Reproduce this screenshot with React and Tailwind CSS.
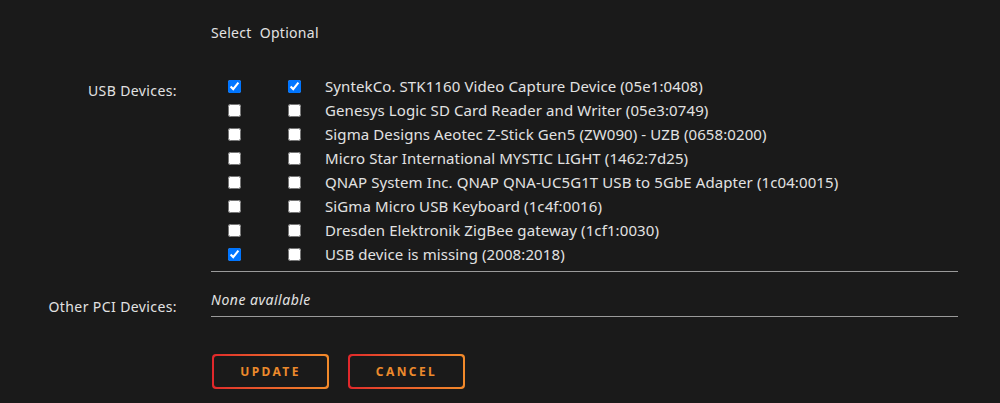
import { useState } from 'react';

const devices = [
  { name: 'SyntekCo. STK1160 Video Capture Device (05e1:0408)', select: true, optional: true },
  { name: 'Genesys Logic SD Card Reader and Writer (05e3:0749)', select: false, optional: false },
  { name: 'Sigma Designs Aeotec Z-Stick Gen5 (ZW090) - UZB (0658:0200)', select: false, optional: false },
  { name: 'Micro Star International MYSTIC LIGHT (1462:7d25)', select: false, optional: false },
  { name: 'QNAP System Inc. QNAP QNA-UC5G1T USB to 5GbE Adapter (1c04:0015)', select: false, optional: false },
  { name: 'SiGma Micro USB Keyboard (1c4f:0016)', select: false, optional: false },
  { name: 'Dresden Elektronik ZigBee gateway (1cf1:0030)', select: false, optional: false },
  { name: 'USB device is missing (2008:2018)', select: true, optional: false },
];

const GradientButton = ({ children }) => (
  <div className="rounded-[4px] bg-gradient-to-r from-[#e0262b] to-[#f28a2a] p-[2px]">
    <button className="flex h-[31px] w-[113px] items-center justify-center rounded-[3px] bg-[#1a1a1a] text-[12px] font-bold tracking-[0.2em] text-[#ec8a2c]">
      {children}
    </button>
  </div>
);

const App = () => {
  const [rows, setRows] = useState(devices);

  const toggle = (i, key) => {
    setRows((prev) => prev.map((r, idx) => (idx === i ? { ...r, [key]: !r[key] } : r)));
  };

  return (
    <div
      className="min-h-[403px] w-full bg-[#1a1a1a] pt-[23px] text-[14px] text-[#e2e2e2]"
      style={{ fontFamily: '"Noto Sans", "Open Sans", sans-serif' }}
    >
      {/* Column headers */}
      <div className="flex h-[20px] items-center pl-[211px] leading-[20px] tracking-[0.3px]">
        <span>Select</span>
        <span className="ml-[8px]">Optional</span>
      </div>

      {/* USB devices */}
      <div className="mt-[31px] flex">
        <div className="w-[177px] pt-[7px] text-right leading-[20px] tracking-[0.4px]">USB Devices:</div>
        <div className="ml-[34px] w-[747px] border-b border-[#9a9a9a] pb-[5px]">
          {rows.map((row, i) => (
            <div key={row.name} className="flex h-[24px] items-center">
              <input
                type="checkbox"
                checked={row.select}
                onChange={() => toggle(i, 'select')}
                className="m-0 ml-[17px] h-[13px] w-[13px]"
              />
              <input
                type="checkbox"
                checked={row.optional}
                onChange={() => toggle(i, 'optional')}
                className="m-0 ml-[47px] h-[13px] w-[13px]"
              />
              <span className="ml-[24px] whitespace-nowrap text-[15px] tracking-[0.1px]">{row.name}</span>
            </div>
          ))}
        </div>
      </div>

      {/* Other PCI devices */}
      <div className="mt-[18px] flex">
        <div className="w-[177px] pt-[7px] text-right leading-[20px] tracking-[0.4px]">Other PCI Devices:</div>
        <div className="ml-[34px] w-[747px] border-b border-[#9a9a9a] pb-[6px] leading-[20px] tracking-[0.5px] italic">
          None available
        </div>
      </div>

      {/* Actions */}
      <div className="mt-[37px] flex gap-[19px] pl-[212px]">
        <GradientButton>UPDATE</GradientButton>
        <GradientButton>CANCEL</GradientButton>
      </div>
    </div>
  );
};

export default App;
